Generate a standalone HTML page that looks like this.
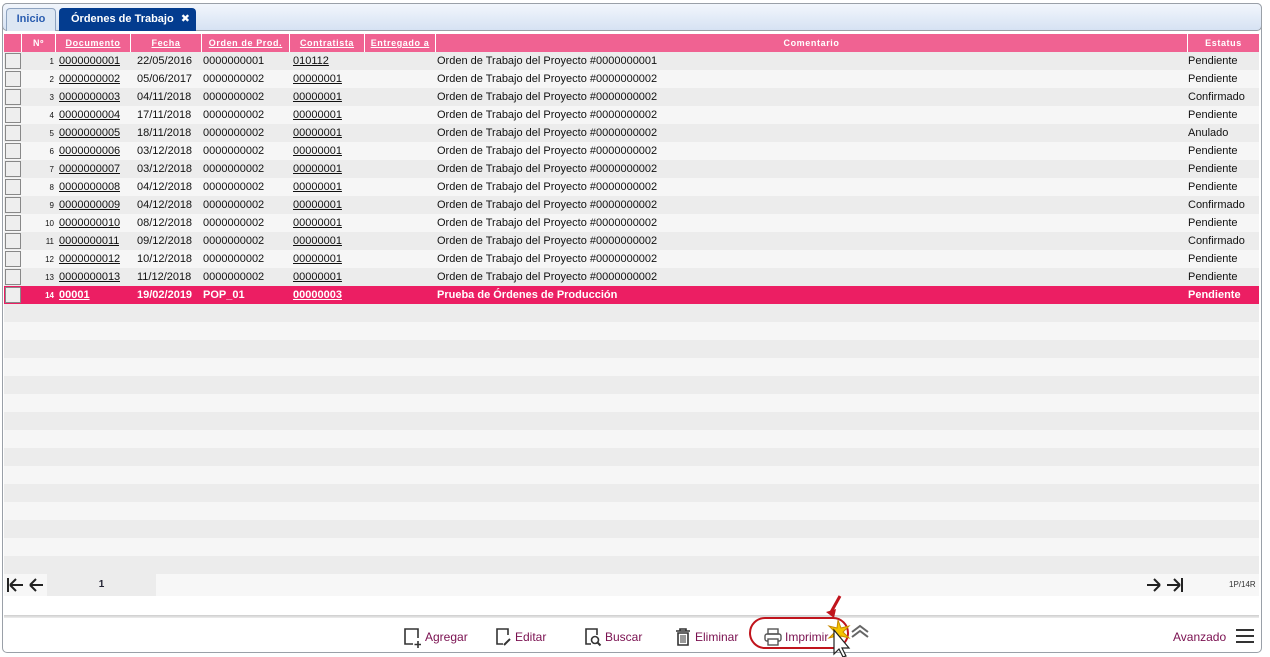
<!DOCTYPE html>
<html><head><meta charset="utf-8"><style>
*{margin:0;padding:0;box-sizing:border-box}
body{width:1270px;height:657px;background:#fff;font-family:"Liberation Sans","DejaVu Sans",sans-serif;font-size:11px;color:#111;position:relative;overflow:hidden}
.frame{position:absolute;left:2px;top:3px;width:1260px;height:650px;border:1px solid #9aa0a8;border-radius:5px;background:#fff}
.tabbar{position:absolute;left:2px;top:3px;width:1260px;height:28px;border:1px solid #9aa0a8;border-radius:5px;background:linear-gradient(#f2f6fc,#d6e2f3)}
.tab{position:absolute;top:8px;height:23px;border:1px solid #8ea3c0;border-bottom:none;border-radius:4px 4px 0 0;font-weight:bold;font-size:11px;line-height:21px;text-align:center}
.grid{position:absolute;left:4px;top:34px;width:1255px}
.row{position:absolute;left:0;width:1255px;height:18px}
.c{position:absolute;top:0;height:18px;line-height:19px;white-space:nowrap;overflow:hidden}
.hd{background:#f06292;color:#fff;font-weight:bold;font-size:9px;letter-spacing:.6px;text-align:center}
.hd .c{border-right:1px solid #fff}
.cb{position:absolute;left:1px;top:1px;width:16px;height:16px;border:1px solid #888;background:#eee}
a{color:#111}
.sel{background:#ec1e63;color:#fff}
.sel a{color:#fff}
.tb{position:absolute;top:627px;font-size:12px;color:#7a1050;height:20px;line-height:20px}
</style></head><body>
<div class="frame"></div>
<div class="tabbar"></div>
<div class="tab" style="left:6px;width:50px;background:#dde7f3;color:#2a5db0">Inicio</div>
<div class="tab" style="left:59px;width:137px;background:#033c8f;color:#fff;border-color:#033c8f;text-align:left;padding-left:11px">Órdenes de Trabajo<span style="position:absolute;right:5px">✖</span></div>
<div class="grid" id="g">
<div class="row hd" style="top:0">
<div class="c" style="left:0;width:18px"></div>
<div class="c" style="left:18px;width:34px">Nº</div>
<div class="c" style="left:52px;width:75px"><u>Documento</u></div>
<div class="c" style="left:127px;width:71px"><u>Fecha</u></div>
<div class="c" style="left:198px;width:88px"><u>Orden de Prod.</u></div>
<div class="c" style="left:286px;width:75px"><u>Contratista</u></div>
<div class="c" style="left:361px;width:71px"><u>Entregado a</u></div>
<div class="c" style="left:432px;width:752px">Comentario</div>
<div class="c" style="left:1184px;width:71px;border:none">Estatus</div>
</div>
</div>
<div style="position:absolute;left:4px;top:574px;width:1255px;height:22px;background:#f7f7f7"></div>
<div style="position:absolute;left:47px;top:574px;width:109px;height:22px;background:#ececec;font-size:10px;font-weight:bold;line-height:22px;text-align:center;color:#223">1</div>
<svg style="position:absolute;left:6px;top:577px" width="40" height="16" viewBox="0 0 40 16"><path d="M2 1v14M4 8h13M4 8l6-6M4 8l6 6" fill="none" stroke="#222" stroke-width="2"/><path d="M24 8h13M24 8l6-6M24 8l6 6" fill="none" stroke="#222" stroke-width="2"/></svg>
<svg style="position:absolute;left:1145px;top:577px" width="40" height="16" viewBox="0 0 40 16"><path d="M2 8h13M15 8l-6-6M15 8l-6 6" fill="none" stroke="#222" stroke-width="2"/><path d="M22 8h13M35 8l-6-6M35 8l-6 6M37 1v14" fill="none" stroke="#222" stroke-width="2"/></svg>
<div style="position:absolute;left:1229px;top:574px;font-size:8px;line-height:22px;color:#333">1P/14R</div>
<div style="position:absolute;left:4px;top:615px;width:1255px;height:3px;background:linear-gradient(#ccc,#eee)"></div>
<svg style="position:absolute;left:403px;top:627px" width="18" height="22" viewBox="0 0 18 22"><path d="M10 17H2V2h13v9" fill="none" stroke="#333" stroke-width="1.6"/><path d="M15 14v7M11.5 17.5h7" stroke="#333" stroke-width="1.6"/></svg>
<div class="tb" style="left:425px">Agregar</div>
<svg style="position:absolute;left:494px;top:627px" width="20" height="20" viewBox="0 0 20 20"><path d="M9 17H3V2h11v6" fill="none" stroke="#333" stroke-width="1.6"/><path d="M10 18l6-6" stroke="#333" stroke-width="2"/></svg>
<div class="tb" style="left:515px">Editar</div>
<svg style="position:absolute;left:584px;top:627px" width="20" height="20" viewBox="0 0 20 20"><path d="M7 17H2V2h11v6" fill="none" stroke="#333" stroke-width="1.6"/><circle cx="11" cy="13" r="3.5" fill="none" stroke="#333" stroke-width="1.6"/><path d="M13.5 15.5l3 3" stroke="#333" stroke-width="2"/></svg>
<div class="tb" style="left:605px">Buscar</div>
<svg style="position:absolute;left:674px;top:627px" width="18" height="20" viewBox="0 0 18 20"><path d="M2 4h14M6 4V2h6v2M4 6h10v12H4z" fill="none" stroke="#333" stroke-width="1.6"/><path d="M7 8v8M9 8v8M11 8v8" stroke="#333"/></svg>
<div class="tb" style="left:695px">Eliminar</div>
<div style="position:absolute;left:749px;top:617px;width:100px;height:32px;border:2px solid #c0141c;border-radius:16px"></div>
<svg style="position:absolute;left:763px;top:628px" width="20" height="18" viewBox="0 0 20 18"><rect x="5" y="1" width="10" height="5" fill="none" stroke="#555" stroke-width="1.4"/><rect x="2" y="6" width="16" height="7" rx="2" fill="none" stroke="#555" stroke-width="1.4"/><rect x="5" y="11" width="10" height="6" fill="#fff" stroke="#555" stroke-width="1.4"/></svg>
<div class="tb" style="left:785px">Imprimir</div>
<svg style="position:absolute;left:820px;top:594px" width="50" height="63" viewBox="0 0 50 63"><path d="M20 2L10 20" stroke="#c0141c" stroke-width="3"/><path d="M6 18l8 6 2-9z" fill="#c0141c"/><path d="M18 26l3 8 8-2-6 6 6 6-8-2-2 8-2-8-8 2 6-6-6-6 8 2z" fill="#f5c400" stroke="#c98a00"/><path d="M32 38l8-6 8 6" fill="none" stroke="#666" stroke-width="2"/><path d="M32 43l8-6 8 6" fill="none" stroke="#666" stroke-width="2"/><path d="M14 36v24l5-5 4 8 3-1-4-8h7z" fill="#fff" stroke="#222" stroke-width="1.2"/></svg>
<div class="tb" style="left:1173px">Avanzado</div>
<div style="position:absolute;left:1236px;top:629px;width:18px;height:14px;border-top:2px solid #333;border-bottom:2px solid #333"><div style="margin-top:4px;height:2px;background:#333"></div></div>
<script>
var d=[["0000000001","22/05/2016","0000000001","010112","#0000000001","Pendiente"],
["0000000002","05/06/2017","0000000002","00000001","#0000000002","Pendiente"],
["0000000003","04/11/2018","0000000002","00000001","#0000000002","Confirmado"],
["0000000004","17/11/2018","0000000002","00000001","#0000000002","Pendiente"],
["0000000005","18/11/2018","0000000002","00000001","#0000000002","Anulado"],
["0000000006","03/12/2018","0000000002","00000001","#0000000002","Pendiente"],
["0000000007","03/12/2018","0000000002","00000001","#0000000002","Pendiente"],
["0000000008","04/12/2018","0000000002","00000001","#0000000002","Pendiente"],
["0000000009","04/12/2018","0000000002","00000001","#0000000002","Confirmado"],
["0000000010","08/12/2018","0000000002","00000001","#0000000002","Pendiente"],
["0000000011","09/12/2018","0000000002","00000001","#0000000002","Confirmado"],
["0000000012","10/12/2018","0000000002","00000001","#0000000002","Pendiente"],
["0000000013","11/12/2018","0000000002","00000001","#0000000002","Pendiente"]];
var h="";
for(var i=0;i<29;i++){
 var t=18+i*18,bg=i%2==0?"#ececec":"#f6f6f6";
 if(i<13){var r=d[i];
  h+='<div class="row" style="top:'+t+'px;background:'+bg+'"><div class="cb"></div><div class="c" style="left:18px;width:32px;text-align:right;font-size:8px">'+(i+1)+'</div><div class="c" style="left:55px"><a href="#">'+r[0]+'</a></div><div class="c" style="left:133px">'+r[1]+'</div><div class="c" style="left:199px">'+r[2]+'</div><div class="c" style="left:289px"><a href="#">'+r[3]+'</a></div><div class="c" style="left:433px">Orden de Trabajo del Proyecto '+r[4]+'</div><div class="c" style="left:1184px">'+r[5]+'</div></div>';}
 else if(i==13){
  h+='<div class="row sel" style="top:'+t+'px;font-weight:bold"><div class="cb"></div><div class="c" style="left:18px;width:32px;text-align:right;font-size:8px">14</div><div class="c" style="left:55px"><a href="#">00001</a></div><div class="c" style="left:133px">19/02/2019</div><div class="c" style="left:199px">POP_01</div><div class="c" style="left:289px"><a href="#">00000003</a></div><div class="c" style="left:433px">Prueba de Órdenes de Producción</div><div class="c" style="left:1184px">Pendiente</div></div>';}
 else {if(t+18<=540)h+='<div class="row" style="top:'+t+'px;background:'+bg+'"></div>';}
}
document.getElementById("g").insertAdjacentHTML("beforeend",h);
</script>
</body></html>
